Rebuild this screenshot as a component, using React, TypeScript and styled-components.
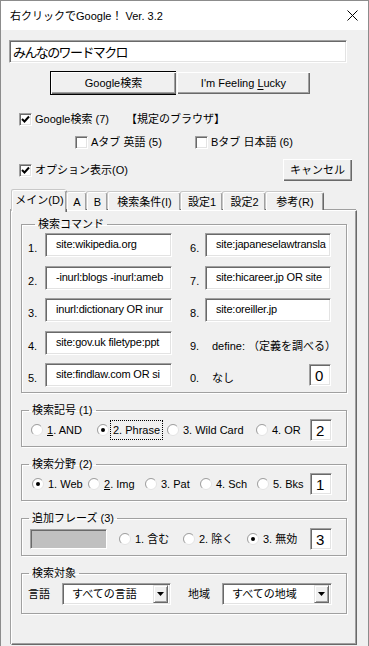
import React from "react";
import styled, { createGlobalStyle } from "styled-components";

const GlobalStyle = createGlobalStyle`
    html, body {
        margin: 0;
        padding: 0;
        background: #f0f0f0;
    }
    body {
        font-family: "Liberation Sans", "Noto Sans CJK JP", sans-serif;
        font-size: 11px;
        color: #000;
    }
    * {
        box-sizing: border-box;
    }
`;

const Window = styled.div`
    width: 369px;
    height: 646px;
    background: #f0f0f0;
    border: 1px solid #8c8c8c;
    border-bottom: none;
    overflow: hidden;
    display: flex;
    flex-direction: column;
`;

const TitleBar = styled.div`
    flex: none;
    height: 29px;
    background: #fff;
    display: flex;
    align-items: center;
    justify-content: space-between;
    padding: 0 10px 0 9px;

    .title {
        font-size: 11px;
        line-height: 16px;
    }
`;

const SearchBox = styled.div`
    margin: 10px 0 0 8px;
    width: 338px;
    height: 23px;
    background: #fff;
    border-top: 1px solid #a0a0a0;
    border-left: 1px solid #a0a0a0;
    border-right: 1px solid #fff;
    border-bottom: 1px solid #fff;
    box-shadow: inset 1px 1px 0 #696969, inset -1px -1px 0 #e3e3e3;
    padding: 0 0 0 3px;
    font-family: "Noto Sans CJK JP", sans-serif;
    font-size: 13px;
    letter-spacing: -1.6px;
    line-height: 21px;
`;

const ButtonRow = styled.div`
    display: flex;
    margin: 8px 0 0 49px;
`;

const Button = styled.div<{ $w: number; $default?: boolean }>`
    width: ${(p) => p.$w}px;
    height: 24px;
    flex: none;
    display: flex;
    align-items: center;
    justify-content: center;
    background: #f0f0f0;
    border: 1px solid ${(p) => (p.$default ? "#000" : "#f0f0f0")};
    box-shadow: inset 1px 1px 0 #fff, inset -1px -1px 0 #696969,
        inset -2px -2px 0 #a0a0a0;
    margin-left: ${(p) => (p.$default ? 0 : -1)}px;
    line-height: 16px;
    white-space: nowrap;

    u {
        text-decoration: underline;
        text-underline-offset: 2px;
    }
`;

const CheckRow = styled.div<{ $top: number; $left: number }>`
    display: flex;
    align-items: center;
    height: 18px;
    margin: ${(p) => p.$top}px 0 0 ${(p) => p.$left}px;
`;

const CheckItem = styled.label<{ $w?: number }>`
    display: flex;
    align-items: center;
    gap: 3px;
    width: ${(p) => (p.$w ? `${p.$w}px` : "auto")};
    flex: none;
    line-height: 16px;
    white-space: nowrap;

    .note {
        margin-left: 14px;
    }
`;

const CheckBox = styled.span`
    width: 13px;
    height: 13px;
    flex: none;
    background: #fff;
    border-top: 1px solid #a0a0a0;
    border-left: 1px solid #a0a0a0;
    border-right: 1px solid #fff;
    border-bottom: 1px solid #fff;
    box-shadow: inset 1px 1px 0 #696969, inset -1px -1px 0 #e3e3e3;
    display: flex;
    align-items: center;
    justify-content: center;
`;

const OptionRow = styled.div`
    display: flex;
    align-items: center;
    justify-content: space-between;
    height: 24px;
    margin: 7px 15px 0 18px;
`;

const TabStrip = styled.div`
    position: relative;
    z-index: 1;
    display: flex;
    align-items: flex-end;
    height: 22px;
    margin: 8px 0 -2px 11px;
`;

const Tab = styled.div<{ $w: number; $active?: boolean }>`
    width: ${(p) => p.$w}px;
    height: ${(p) => (p.$active ? 22 : 18)}px;
    margin-bottom: ${(p) => (p.$active ? 0 : 2)}px;
    flex: none;
    display: flex;
    align-items: center;
    justify-content: center;
    background: #f0f0f0;
    border-top: 1px solid #fff;
    border-left: 1px solid #fff;
    border-right: 1px solid #696969;
    box-shadow: inset -1px 0 0 #a0a0a0, -1px -1px 0 #c8c8c8;
    border-radius: 2px 2px 0 0;
    padding-bottom: ${(p) => (p.$active ? 3 : 0)}px;
    line-height: 16px;
    white-space: nowrap;
`;

const Panel = styled.div`
    margin-left: 10px;
    width: 346px;
    height: 435px;
    flex: none;
    background: #f0f0f0;
    border-top: 1px solid #fff;
    border-left: 1px solid #fff;
    border-right: 1px solid #696969;
    border-bottom: 1px solid #696969;
    box-shadow: inset -1px -1px 0 #a0a0a0, -1px -1px 0 #a0a0a0;
    padding: 5px 9px 0 9px;
    display: flex;
    flex-direction: column;
    gap: 9px;
`;

const Group = styled.fieldset<{ $pad: string }>`
    margin: 0;
    min-width: 0;
    border: 1px solid #a0a0a0;
    box-shadow: inset 1px 1px 0 #fff, 1px 1px 0 #fff;
    padding: ${(p) => p.$pad};

    legend {
        margin-left: 7px;
        padding: 0 3px;
        line-height: 16px;
    }
`;

const CommandGrid = styled.div`
    display: grid;
    grid-template-columns: 17px 127px 18px 15px 126px;
    grid-auto-rows: 24px;
    row-gap: 8.5px;
`;

const Num = styled.span`
    align-self: center;
    margin-top: 6px;
    line-height: 16px;
`;

const Field = styled.div`
    min-width: 0;
    height: 100%;
    background: #fff;
    border-top: 1px solid #a0a0a0;
    border-left: 1px solid #a0a0a0;
    border-right: 1px solid #fff;
    border-bottom: 1px solid #fff;
    box-shadow: inset 1px 1px 0 #696969, inset -1px -1px 0 #e3e3e3;
    padding: 2px 0 0 10px;
    overflow: hidden;
    white-space: nowrap;
    letter-spacing: -0.2px;
    line-height: 16px;
`;

const DigitBox = styled.div`
    flex: none;
    width: 22px;
    height: 22px;
    background: #fff;
    border-top: 1px solid #a0a0a0;
    border-left: 1px solid #a0a0a0;
    border-right: 1px solid #fff;
    border-bottom: 1px solid #fff;
    box-shadow: inset 1px 1px 0 #696969, inset -1px -1px 0 #e3e3e3;
    padding: 0 0 0 5px;
    font-size: 15px;
    line-height: 21px;
`;

const NoteCell = styled.div`
    min-width: 0;
    display: flex;
    align-items: center;
    justify-content: space-between;
    padding-left: 7px;
    white-space: nowrap;

    span {
        margin-top: 4px;
    }
`;

const RadioRow = styled.div<{ $left: number }>`
    display: flex;
    align-items: center;
    height: 22px;
    padding-left: ${(p) => p.$left}px;
`;

const RadioItem = styled.label<{ $w: number; $focus?: boolean }>`
    display: flex;
    align-items: center;
    gap: 3px;
    width: ${(p) => p.$w}px;
    flex: none;
    white-space: nowrap;
    line-height: 16px;

    .text {
        padding: 0 1px;
        outline: ${(p) => (p.$focus ? "1px dotted #000" : "none")};
        outline-offset: 1px;
    }
`;

const GrayBox = styled.div`
    width: 77px;
    height: 20px;
    margin: 0 12px 0 8px;
    background: #c0c0c0;
    border-top: 1px solid #a0a0a0;
    border-left: 1px solid #a0a0a0;
    border-right: 1px solid #fff;
    border-bottom: 1px solid #fff;
    box-shadow: inset 1px 1px 0 #696969;
    flex: none;
`;

const SelectRow = styled.div`
    display: flex;
    align-items: center;
    height: 22px;
    padding-left: 6px;
`;

const SelectLabel = styled.span<{ $w: number; $gap?: number }>`
    width: ${(p) => p.$w}px;
    margin-left: ${(p) => p.$gap ?? 0}px;
    flex: none;
    line-height: 16px;
`;

const Select = styled.div<{ $w: number }>`
    width: ${(p) => p.$w}px;
    height: 22px;
    flex: none;
    display: flex;
    align-items: center;
    justify-content: space-between;
    background: #fff;
    border-top: 1px solid #a0a0a0;
    border-left: 1px solid #a0a0a0;
    border-right: 1px solid #fff;
    border-bottom: 1px solid #fff;
    box-shadow: inset 1px 1px 0 #696969, inset -1px -1px 0 #e3e3e3;
    padding: 0 2px 0 9px;
    line-height: 16px;
`;

const DropButton = styled.span`
    width: 15px;
    height: 18px;
    background: #f0f0f0;
    border-top: 1px solid #e3e3e3;
    border-left: 1px solid #e3e3e3;
    border-right: 1px solid #696969;
    border-bottom: 1px solid #696969;
    box-shadow: inset 1px 1px 0 #fff, inset -1px -1px 0 #a0a0a0;
    display: flex;
    align-items: center;
    justify-content: center;
`;

const Check = ({ checked }: { checked?: boolean }) => (
    <CheckBox>
        {checked && (
            <svg width="9" height="9" viewBox="0 0 9 9">
                <path d="M1 4 L3.5 6.5 L8 1.5" stroke="#000" strokeWidth="2" fill="none" />
            </svg>
        )}
    </CheckBox>
);

const Radio = ({ checked }: { checked?: boolean }) => (
    <svg width="12" height="12" viewBox="0 0 12 12" style={{ flex: "none" }}>
        <circle cx="6" cy="6" r="5.5" fill="#fff" stroke="#e3e3e3" />
        <path d="M2.1 9.9 A5.5 5.5 0 0 1 9.9 2.1" stroke="#a0a0a0" fill="none" />
        {checked && <circle cx="6" cy="6" r="2" fill="#000" />}
    </svg>
);

const Arrow = () => (
    <DropButton>
        <svg width="7" height="4" viewBox="0 0 7 4">
            <path d="M0 0 H7 L3.5 4 Z" fill="#000" />
        </svg>
    </DropButton>
);

// only the part of each command that fits in its box is shown
const commands: [string, string][] = [
    ["site:wikipedia.org", "site:japaneselawtransla"],
    ["-inurl:blogs -inurl:ameb", "site:hicareer.jp OR site"],
    ["inurl:dictionary OR inur", "site:oreiller.jp"],
];

const App = () => {
    return (
        <>
            <GlobalStyle />
            <Window>
                <TitleBar>
                    <span className="title">右クリックでGoogle！ Ver. 3.2</span>
                    <svg width="11" height="11" viewBox="0 0 11 11">
                        <path d="M0.5 0.5 L10.5 10.5 M10.5 0.5 L0.5 10.5" stroke="#000" strokeWidth="1" />
                    </svg>
                </TitleBar>

                <SearchBox>みんなのワードマクロ</SearchBox>

                <ButtonRow>
                    <Button $w={127} $default>
                        Google検索
                    </Button>
                    <Button $w={135}>
                        I'm Feeling&nbsp;<u>L</u>ucky
                    </Button>
                </ButtonRow>

                <CheckRow $top={15} $left={18}>
                    <CheckItem>
                        <Check checked />
                        Google検索 (7)
                        <span className="note">【規定のブラウザ】</span>
                    </CheckItem>
                </CheckRow>

                <CheckRow $top={5} $left={74}>
                    <CheckItem $w={120}>
                        <Check />
                        Aタブ 英語 (5)
                    </CheckItem>
                    <CheckItem>
                        <Check />
                        Bタブ 日本語 (6)
                    </CheckItem>
                </CheckRow>

                <OptionRow>
                    <CheckItem>
                        <Check checked />
                        オプション表示(O)
                    </CheckItem>
                    <Button $w={71}>キャンセル</Button>
                </OptionRow>

                <TabStrip>
                    <Tab $w={55} $active>
                        メイン(D)
                    </Tab>
                    <Tab $w={20}>A</Tab>
                    <Tab $w={21}>B</Tab>
                    <Tab $w={73}>検索条件(I)</Tab>
                    <Tab $w={42}>設定1</Tab>
                    <Tab $w={43}>設定2</Tab>
                    <Tab $w={58}>参考(R)</Tab>
                </TabStrip>

                <Panel>
                    <Group $pad="1px 0 5px 6px">
                        <legend>検索コマンド</legend>
                        <CommandGrid>
                            {commands.map((row, i) => (
                                <React.Fragment key={i}>
                                    <Num>{i + 1}.</Num>
                                    <Field>{row[0]}</Field>
                                    <span />
                                    <Num>{i + 6}.</Num>
                                    <Field>{row[1]}</Field>
                                </React.Fragment>
                            ))}
                            <Num>4.</Num>
                            <Field>site:gov.uk filetype:ppt</Field>
                            <span />
                            <Num>9.</Num>
                            <NoteCell>
                                <span>define: （定義を調べる）</span>
                            </NoteCell>
                            <Num>5.</Num>
                            <Field>site:findlaw.com OR si</Field>
                            <span />
                            <Num>0.</Num>
                            <NoteCell>
                                <span>なし</span>
                                <DigitBox>0</DigitBox>
                            </NoteCell>
                        </CommandGrid>
                    </Group>

                    <Group $pad="1px 0 5px 0">
                        <legend>検索記号 (1)</legend>
                        <RadioRow $left={9}>
                            <RadioItem $w={66}>
                                <Radio />
                                <span className="text">
                                    <u>1</u>. AND
                                </span>
                            </RadioItem>
                            <RadioItem $w={70} $focus>
                                <Radio checked />
                                <span className="text">2. Phrase</span>
                            </RadioItem>
                            <RadioItem $w={89}>
                                <Radio />
                                <span className="text">3. Wild Card</span>
                            </RadioItem>
                            <RadioItem $w={54}>
                                <Radio />
                                <span className="text">4. OR</span>
                            </RadioItem>
                            <DigitBox>2</DigitBox>
                        </RadioRow>
                    </Group>

                    <Group $pad="1px 0 5px 0">
                        <legend>検索分野 (2)</legend>
                        <RadioRow $left={10}>
                            <RadioItem $w={56}>
                                <Radio checked />
                                <span className="text">1. Web</span>
                            </RadioItem>
                            <RadioItem $w={57}>
                                <Radio />
                                <span className="text">
                                    <u>2</u>. Img
                                </span>
                            </RadioItem>
                            <RadioItem $w={55}>
                                <Radio />
                                <span className="text">3. Pat</span>
                            </RadioItem>
                            <RadioItem $w={57}>
                                <Radio />
                                <span className="text">4. Sch</span>
                            </RadioItem>
                            <RadioItem $w={53}>
                                <Radio />
                                <span className="text">5. Bks</span>
                            </RadioItem>
                            <DigitBox>1</DigitBox>
                        </RadioRow>
                    </Group>

                    <Group $pad="2px 0 5px 0">
                        <legend>追加フレーズ (3)</legend>
                        <RadioRow $left={0}>
                            <GrayBox />
                            <RadioItem $w={64}>
                                <Radio />
                                <span className="text">1. 含む</span>
                            </RadioItem>
                            <RadioItem $w={64}>
                                <Radio />
                                <span className="text">2. 除く</span>
                            </RadioItem>
                            <RadioItem $w={63}>
                                <Radio checked />
                                <span className="text">3. 無効</span>
                            </RadioItem>
                            <DigitBox>3</DigitBox>
                        </RadioRow>
                    </Group>

                    <Group $pad="2px 0 8px 0">
                        <legend>検索対象</legend>
                        <SelectRow>
                            <SelectLabel $w={34}>言語</SelectLabel>
                            <Select $w={109}>
                                すべての言語
                                <Arrow />
                            </Select>
                            <SelectLabel $w={34} $gap={17}>
                                地域
                            </SelectLabel>
                            <Select $w={110}>
                                すべての地域
                                <Arrow />
                            </Select>
                        </SelectRow>
                    </Group>
                </Panel>
            </Window>
        </>
    );
};

export default App;
